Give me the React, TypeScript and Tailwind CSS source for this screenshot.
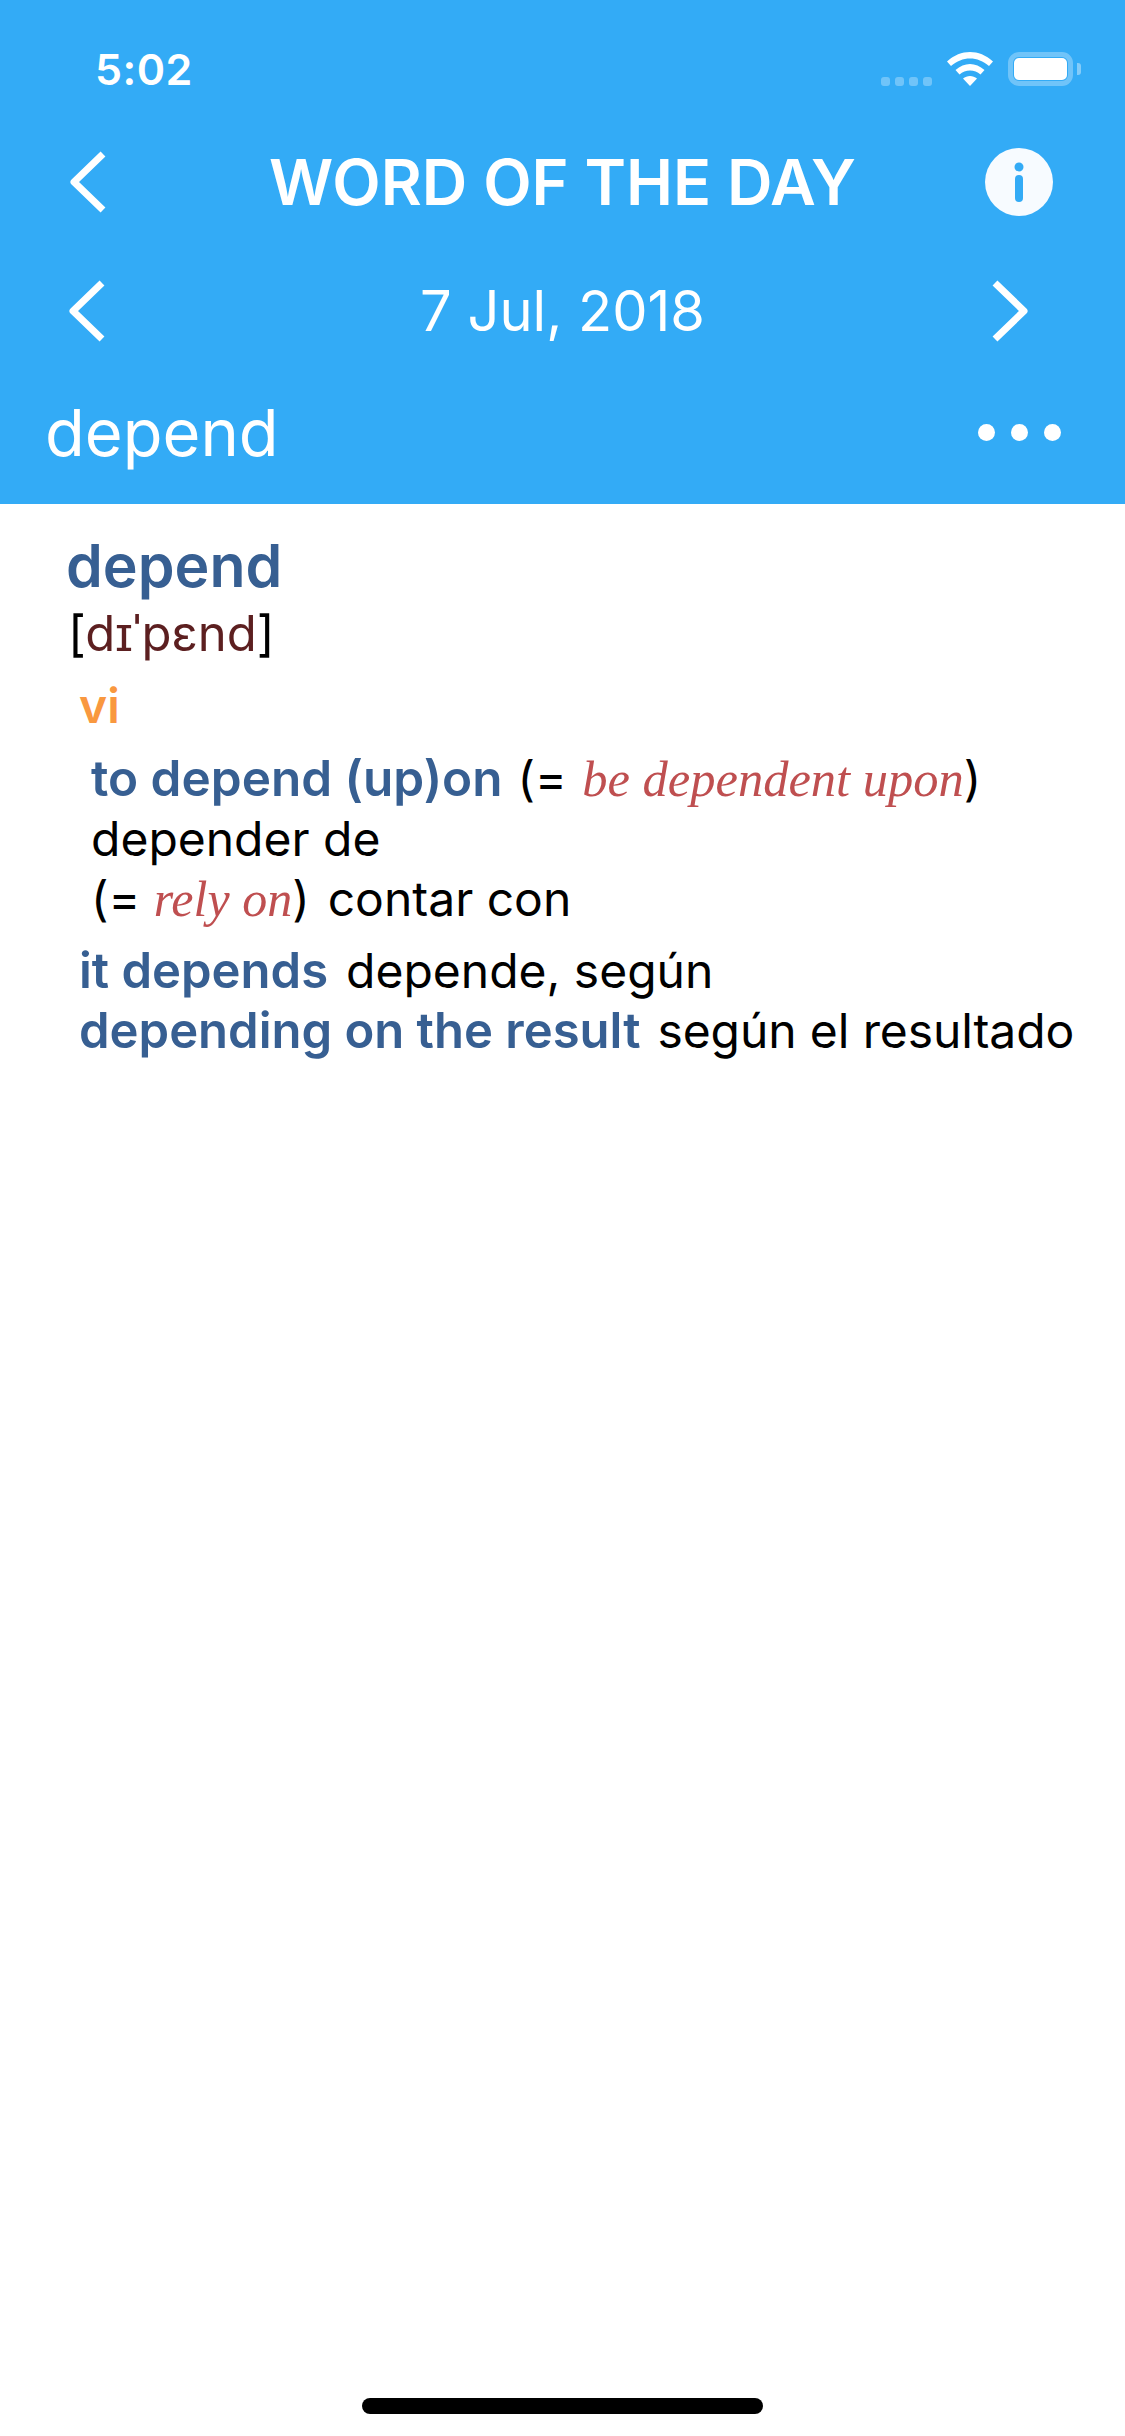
import React from "react";

const font = { sans: "font-['Inter','Liberation_Sans',sans-serif]" };

function Chevron({ right = false }: { right?: boolean }) {
  return (
    <svg width="38" height="62" viewBox="0 0 38 62" fill="none">
      <path
        d={right ? "M4 3 L33 31 L4 59" : "M34 3 L5 31 L34 59"}
        stroke="white"
        strokeWidth="7"
        strokeLinejoin="round"
      />
    </svg>
  );
}

function StatusIcons() {
  return (
    <div className="flex items-center">
      {/* signal dots */}
      <div className="flex gap-[5px] mt-[25px]">
        <div className="w-[9px] h-[9px] rounded-[3px] bg-white/30" />
        <div className="w-[9px] h-[9px] rounded-[3px] bg-white/30" />
        <div className="w-[9px] h-[9px] rounded-[3px] bg-white/30" />
        <div className="w-[9px] h-[9px] rounded-[3px] bg-white/30" />
      </div>
      {/* wifi */}
      <svg className="ml-[15px]" width="46" height="34" viewBox="0 0 46 34" fill="white">
        <path d="M23 0 C31 0 39 3 46 9.500 L42 14 C36 9 30 6.500 23 6.500 C16 6.500 10 9 4 14 L0 9.500 C7 3 15 0 23 0 Z" />
        <path d="M23 12 C28 12 33 14 37.500 18 L33.500 22.500 C30.500 20 27 18.500 23 18.500 C19 18.500 15.500 20 12.500 22.500 L8.500 18 C13 14 18 12 23 12 Z" />
        <path d="M23 24 C25.500 24 28 25 30 26.500 L23 34 L16 26.500 C18 25 20.500 24 23 24 Z" />
      </svg>
      {/* battery */}
      <div className="ml-[15px] w-[65px] h-[34px] rounded-[11px] border-[5px] border-white/30 p-[1px]">
        <div className="w-full h-full rounded-[5px] bg-white" />
      </div>
      <div className="ml-[4px] w-[4px] h-[12px] rounded-r-[3px] bg-white/40" />
    </div>
  );
}

function InfoIcon() {
  return (
    <svg width="68" height="68" viewBox="0 0 68 68">
      <circle cx="34" cy="34" r="34" fill="#f7fbff" />
      <circle cx="34" cy="19" r="4.500" fill="#33abf6" />
      <rect x="30" y="27" width="8" height="27" rx="4" fill="#33abf6" />
    </svg>
  );
}

export default function App() {
  return (
    <div className={`flex flex-col h-[2436px] w-[1125px] bg-white overflow-hidden ${font.sans}`}>
      {/* header */}
      <div className="bg-[#33abf6] h-[504px] text-white shrink-0">
        <div className="flex items-center justify-between h-[136px] pt-[2px] pl-[95px] pr-[44px]">
          <span className="text-[43px] leading-none font-semibold tracking-[0.5px]">5:02</span>
          <StatusIcons />
        </div>

        <div className="flex items-center h-[92px]">
          <div className="w-[140px] pl-[69px]">
            <Chevron />
          </div>
          <span className="flex-1 text-center text-[63px] leading-none font-semibold">WORD OF THE DAY</span>
          <div className="w-[140px] pr-[72px] flex justify-end">
            <InfoIcon />
          </div>
        </div>

        <div className="flex items-center h-[122px] mt-[22px]">
          <div className="w-[140px] pl-[68px]">
            <Chevron />
          </div>
          <span className="flex-1 text-center text-[56px] leading-none font-normal">7 Jul, 2018</span>
          <div className="w-[140px] pr-[96px] flex justify-end">
            <Chevron right />
          </div>
        </div>

        <div className="flex items-center justify-between h-[120px] pl-[45px] pr-[64px]">
          <span className="text-[65px] leading-none font-normal">depend</span>
          <div className="flex gap-[16px]">
            <div className="w-[17px] h-[17px] rounded-full bg-white" />
            <div className="w-[17px] h-[17px] rounded-full bg-white" />
            <div className="w-[17px] h-[17px] rounded-full bg-white" />
          </div>
        </div>
      </div>

      {/* entry */}
      <div className="flex-1 pt-[28px] text-[48px] leading-[60px] text-black">
        <div className="pl-[66px] text-[59px] leading-[68px] font-semibold text-[#375f92]">depend</div>
        <div className="pl-[68px] text-[49px] text-[#5c1f20] mt-[4px]">
          <span className="text-black">[</span>dɪˈpɛnd<span className="text-black">]</span>
        </div>
        <div className="pl-[79px] mt-[12px] font-semibold text-[#f9983f]">vi</div>

        <div className="pl-[91px] mt-[12px]">
          <div className="flex gap-[15px] items-baseline">
            <span className="text-[49.5px] font-semibold text-[#375f92]">to depend (up)on</span>
            <span>
              (= <span className="ml-[2px] font-['Liberation_Serif',serif] text-[50.5px] italic text-[#bf4f50]">be dependent upon</span>)
            </span>
          </div>
          <div>depender de</div>
          <div className="flex gap-[18px] items-baseline">
            <span>
              (= <span className="font-['Liberation_Serif',serif] text-[50px] italic text-[#bf4f50]">rely on</span>)
            </span>
            <span>contar con</span>
          </div>
        </div>

        <div className="pl-[79px] mt-[12px]">
          <div className="flex gap-[18px] items-baseline">
            <span className="text-[49px] font-semibold text-[#375f92]">it depends</span>
            <span>depende, según</span>
          </div>
          <div className="flex gap-[17px] items-baseline">
            <span className="text-[49px] font-semibold text-[#375f92]">depending on the result</span>
            <span className="tracking-[-0.1px]">según el resultado</span>
          </div>
        </div>
      </div>

      {/* home indicator */}
      <div className="flex justify-center pb-[22px] shrink-0">
        <div className="w-[401px] h-[16px] rounded-full bg-black" />
      </div>
    </div>
  );
}
